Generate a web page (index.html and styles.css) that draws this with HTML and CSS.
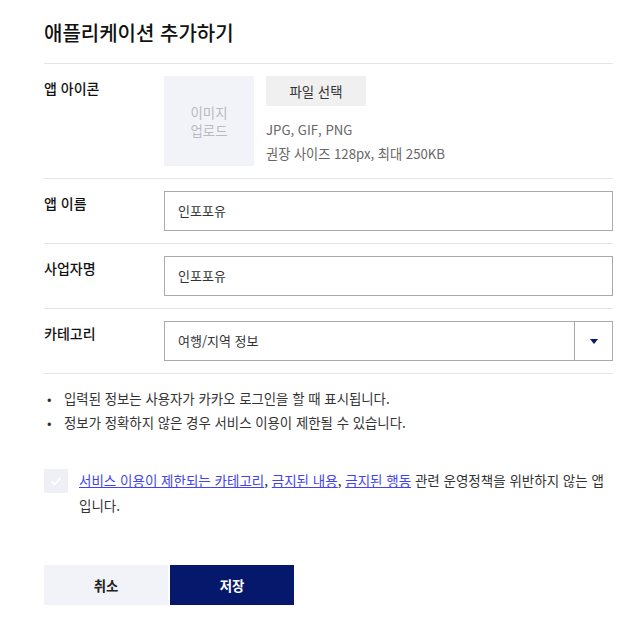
FILE: index.html
```html
<!DOCTYPE html>
<html lang="ko">
<head>
<meta charset="utf-8">
<title>애플리케이션 추가하기</title>
<link rel="stylesheet" href="styles.css">
</head>
<body>
<div class="page">
  <h1 class="title">애플리케이션 추가하기</h1>

  <div class="row">
    <div class="label">앱 아이콘</div>
    <div class="icon-field">
      <div class="icon-box">이미지<br>업로드</div>
      <div class="icon-info">
        <button class="file-btn" type="button">파일 선택</button>
        <div class="hints">
          <div>JPG, GIF, PNG</div>
          <div>권장 사이즈 128px, 최대 250KB</div>
        </div>
      </div>
    </div>
  </div>

  <div class="row">
    <div class="label">앱 이름</div>
    <div class="input">인포포유</div>
  </div>

  <div class="row">
    <div class="label">사업자명</div>
    <div class="input">인포포유</div>
  </div>

  <div class="row">
    <div class="label">카테고리</div>
    <div class="select">
      <div class="select-value">여행/지역 정보</div>
      <div class="select-arrow">
        <svg width="8" height="5" viewBox="0 0 8 5"><polygon points="0,0 8,0 4,5" fill="#0a1a6b"/></svg>
      </div>
    </div>
  </div>

  <div class="divider"></div>

  <ul class="notes">
    <li>입력된 정보는 사용자가 카카오 로그인을 할 때 표시됩니다.</li>
    <li>정보가 정확하지 않은 경우 서비스 이용이 제한될 수 있습니다.</li>
  </ul>

  <div class="agree">
    <span class="check">
      <svg width="24" height="24" viewBox="0 0 24 24"><polyline points="7.5,12.5 10.5,15.5 16.5,9" fill="none" stroke="#ffffff" stroke-width="1.6"/></svg>
    </span>
    <p class="agree-text"><a href="#">서비스 이용이 제한되는 카테고리</a>, <a href="#">금지된 내용</a>, <a href="#">금지된 행동</a> 관련 운영정책을 위반하지 않는 앱입니다.</p>
  </div>

  <div class="actions">
    <button class="btn btn-cancel" type="button">취소</button>
    <button class="btn btn-save" type="button">저장</button>
  </div>
</div>
</body>
</html>
```
FILE: styles.css
```css
* { box-sizing: border-box; }
html, body { margin: 0; padding: 0; background: #fff; }
body {
  font-family: "Noto Sans CJK KR", "Noto Sans", sans-serif;
  color: #222;
  font-size: 13px;
}
.page {
  width: 569px;
  margin-left: 44px;
  padding-top: 19px;
}
.title {
  margin: 0 0 16px;
  font-size: 20px;
  line-height: 28px;
  font-weight: 500;
  color: #111;
}
.row {
  display: grid;
  grid-template-columns: 120px 1fr;
  border-top: 1px solid #e5e5e5;
  padding: 12px 0;
}
.label {
  font-size: 14px;
  line-height: 24px;
  font-weight: 500;
  color: #111;
}
.icon-field { display: flex; gap: 12px; }
.icon-box {
  width: 90px;
  height: 90px;
  background: #f2f3f8;
  color: #b9b9bf;
  display: flex;
  align-items: center;
  justify-content: center;
  text-align: center;
  line-height: 18px;
  font-size: 13.4px;
}
.file-btn {
  width: 100px;
  height: 30px;
  border: none;
  background: #f0f0f0;
  font: inherit;
  font-size: 13.4px;
  color: #333;
  padding: 0;
}
.hints {
  margin-top: 12px;
  line-height: 24px;
  color: #666;
  font-size: 13.2px;
}
.input, .select {
  height: 40px;
  border: 1px solid #aaa;
  line-height: 38px;
  color: #333;
}
.input { padding-left: 13px; }
.select { display: flex; }
.select-value { flex: 1; padding-left: 13px; }
.select-arrow {
  width: 38px;
  border-left: 1px solid #aaa;
  display: flex;
  align-items: center;
  justify-content: center;
}
.divider { border-top: 1px solid #e5e5e5; }
.notes {
  list-style: none;
  margin: 0;
  padding: 12px 0 0;
  line-height: 24px;
  color: #333;
  font-size: 13.4px;
}
.notes li { display: flex; }
.notes li::before {
  content: "•";
  width: 17px;
  padding-left: 3px;
}
.agree {
  display: flex;
  gap: 11px;
  margin-top: 34px;
}
.check {
  flex: none;
  width: 24px;
  height: 24px;
  margin-top: 1px;
  background: #eff0f6;
  display: flex;
}
.agree-text {
  margin: 0;
  line-height: 25px;
  color: #333;
  font-size: 13.5px;
}
.agree-text a { color: #4343ee; text-decoration: underline; }
.actions {
  display: flex;
  gap: 2px;
  margin-top: 47px;
}
.btn {
  width: 124px;
  height: 40px;
  border: none;
  font: inherit;
  font-size: 13.4px;
  font-weight: 700;
  padding: 0;
}
.btn-cancel { background: #f2f3f8; color: #222; }
.btn-save { background: #06186b; color: #fff; }
```
